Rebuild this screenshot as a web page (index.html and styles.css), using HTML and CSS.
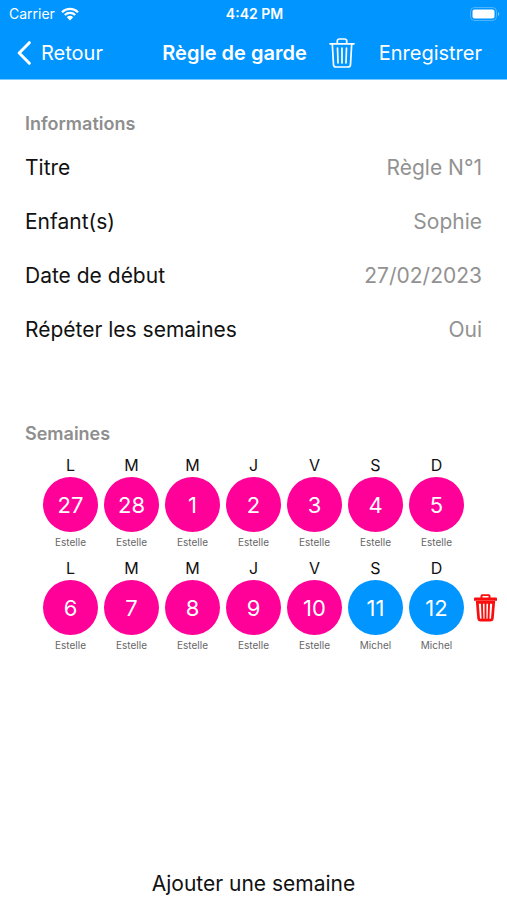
FILE: index.html
```html
<!DOCTYPE html>
<html lang="fr">
<head>
<meta charset="utf-8">
<meta name="viewport" content="width=device-width, initial-scale=1">
<title>Règle de garde</title>
<link rel="stylesheet" href="styles.css">
</head>
<body>
<header class="header">
  <div class="status">
    <div class="carrier">
      <span>Carrier</span>
      <svg class="wifi" viewBox="0 0 18 14" aria-hidden="true">
        <path d="M1 5.2a11.4 11.4 0 0 1 16 0M3.8 8a7.4 7.4 0 0 1 10.4 0" fill="none" stroke="currentColor" stroke-width="2.2"/>
        <path d="M5.8 10.2a4.5 4.5 0 0 1 6.4 0L9 13.4z" fill="currentColor"/>
      </svg>
    </div>
    <span class="clock">4:42 PM</span>
    <svg class="battery" viewBox="0 0 30 14" aria-hidden="true">
      <rect x="0.5" y="0.5" width="26" height="13" rx="4" fill="none" stroke="currentColor" opacity="0.3"/>
      <rect x="2.500" y="2.500" width="22" height="9" rx="2" fill="currentColor"/>
      <path d="M28 5v4c1.600-.6 1.600-3.400 0-4z" fill="currentColor" opacity="0.5"/>
    </svg>
  </div>
  <nav class="nav">
    <button class="back" type="button">
      <svg class="chevron" viewBox="0 0 14 24" aria-hidden="true">
        <path d="M12.300 1.700 2.200 12l10.100 10.300" fill="none" stroke="currentColor" stroke-width="3" stroke-linecap="round" stroke-linejoin="round"/>
      </svg>
      <span>Retour</span>
    </button>
    <h1 class="title">Règle de garde</h1>
    <button class="delete" type="button" aria-label="Supprimer la règle">
      <svg class="bin" viewBox="0 0 26 30" fill="none" stroke="currentColor" stroke-width="1.700" stroke-linecap="round" stroke-linejoin="round" aria-hidden="true">
        <path d="M1 5.800h24M8.300 5.500V3a2 2 0 0 1 2-2h5.400a2 2 0 0 1 2 2v2.500M3.300 6l1.200 20.500a2.500 2.500 0 0 0 2.500 2.500h12a2.500 2.500 0 0 0 2.500-2.500L22.700 6M8.500 10l.5 15M13 10v15M17.500 10l-.5 15"/>
      </svg>
    </button>
    <button class="save" type="submit" form="rule">Enregistrer</button>
  </nav>
</header>
<main class="main">
  <form id="rule">
    <h2 class="section">Informations</h2>
    <div class="row"><label for="titre">Titre</label><input id="titre" type="text" value="Règle N°1"></div>
    <div class="row"><label for="enfants">Enfant(s)</label><input id="enfants" type="text" value="Sophie"></div>
    <div class="row"><label for="debut">Date de début</label><input id="debut" type="text" value="27/02/2023"></div>
    <div class="row"><label for="repeter">Répéter les semaines</label><input id="repeter" type="text" value="Oui"></div>
  </form>
  <section class="weeks">
    <h2 class="section">Semaines</h2>
    <div class="week">
      <div class="day"><span>L</span><button class="date estelle" type="button">27</button><small>Estelle</small></div>
      <div class="day"><span>M</span><button class="date estelle" type="button">28</button><small>Estelle</small></div>
      <div class="day"><span>M</span><button class="date estelle" type="button">1</button><small>Estelle</small></div>
      <div class="day"><span>J</span><button class="date estelle" type="button">2</button><small>Estelle</small></div>
      <div class="day"><span>V</span><button class="date estelle" type="button">3</button><small>Estelle</small></div>
      <div class="day"><span>S</span><button class="date estelle" type="button">4</button><small>Estelle</small></div>
      <div class="day"><span>D</span><button class="date estelle" type="button">5</button><small>Estelle</small></div>
    </div>
    <div class="week">
      <div class="day"><span>L</span><button class="date estelle" type="button">6</button><small>Estelle</small></div>
      <div class="day"><span>M</span><button class="date estelle" type="button">7</button><small>Estelle</small></div>
      <div class="day"><span>M</span><button class="date estelle" type="button">8</button><small>Estelle</small></div>
      <div class="day"><span>J</span><button class="date estelle" type="button">9</button><small>Estelle</small></div>
      <div class="day"><span>V</span><button class="date estelle" type="button">10</button><small>Estelle</small></div>
      <div class="day"><span>S</span><button class="date michel" type="button">11</button><small>Michel</small></div>
      <div class="day"><span>D</span><button class="date michel" type="button">12</button><small>Michel</small></div>
      <button class="remove" type="button" aria-label="Supprimer la semaine">
        <svg viewBox="0 0 23 28" aria-hidden="true">
          <path d="M6.500 3.500V2A1.700 1.700 0 0 1 8.200.3h6.600A1.700 1.700 0 0 1 16.500 2v1.500H22a1 1 0 0 1 1 1v2.200H0V4.500a1 1 0 0 1 1-1zM8.500 3.500h6V2.100h-6z" fill="currentColor" fill-rule="evenodd"/>
          <path d="M3.300 8.300l1.300 15.900a2.200 2.200 0 0 0 2.200 2h9.400a2.200 2.200 0 0 0 2.200-2l1.300-15.900z" fill="none" stroke="currentColor" stroke-width="2.700"/>
          <path d="M7.900 9l.6 16M11.500 9v16M15.100 9l-.6 16" fill="none" stroke="currentColor" stroke-width="1.900"/>
        </svg>
      </button>
    </div>
  </section>
</main>
<footer class="footer">
  <button class="add" type="button">Ajouter une semaine</button>
</footer>
</body>
</html>
```
FILE: styles.css
```css
* {
  box-sizing: border-box;
}

body {
  margin: 0;
  min-height: 100vh;
  display: flex;
  flex-direction: column;
  background: #fff;
  color: #111;
  font-family: Inter, "Liberation Sans", sans-serif;
  font-size: 21px;
  line-height: 24px;
}

button,
input {
  margin: 0;
  padding: 0;
  border: 0;
  background: none;
  color: inherit;
  font: inherit;
}

svg {
  display: block;
}

.header {
  background: #0095ff;
  border-bottom: 1px solid #7cc8ff;
  color: #fff;
}

.status {
  display: grid;
  grid-template-columns: 1fr auto 1fr;
  align-items: center;
  height: 27px;
  padding: 0 7px 0 9px;
  font-size: 14px;
  line-height: 20px;
}

.carrier {
  display: flex;
  align-items: center;
  gap: 6px;
}

.wifi {
  width: 18px;
  height: 14px;
}

.clock {
  font-weight: 600;
}

.battery {
  width: 30px;
  height: 14px;
  justify-self: end;
}

.nav {
  display: flex;
  align-items: center;
  height: 52px;
  padding: 0 25px 0 17px;
  font-size: 20px;
}

.back {
  display: flex;
  align-items: center;
  gap: 10px;
}

.chevron {
  width: 14px;
  height: 24px;
}

.title {
  margin: 0 0 0 auto;
  font-size: 20px;
  font-weight: 600;
}

.delete {
  margin: 0 24px 0 22px;
}

.bin {
  width: 26px;
  height: 30px;
}

.main {
  flex: 1;
  padding-top: 32px;
}

.section {
  margin: 0;
  padding: 0 25px;
  color: #8e8e8e;
  font-size: 18px;
  font-weight: 600;
  line-height: 24px;
}

.row {
  display: flex;
  align-items: center;
  gap: 16px;
  height: 54px;
  padding: 0 25px;
}

.section + .row {
  margin-top: 5px;
}

.row input {
  flex: 1;
  min-width: 0;
  color: #929292;
  text-align: right;
}

.weeks {
  margin-top: 65px;
}

.week {
  display: grid;
  grid-template-columns: repeat(7, 1fr) 27px;
  column-gap: 6px;
  padding: 0 10px 4px 43px;
}

.section + .week {
  margin-top: 7px;
}

.day {
  display: flex;
  flex-direction: column;
  text-align: center;
  font-size: 16px;
}

.date {
  width: 100%;
  aspect-ratio: 1;
  border-radius: 50%;
  color: #fff;
  font-size: 22px;
}

.estelle {
  background: #ff0099;
}

.michel {
  background: #0095ff;
}

.day small {
  color: #666;
  font-size: 10px;
  line-height: 20px;
}

.remove {
  align-self: center;
  justify-self: end;
  padding-top: 4px;
  color: #f90d0d;
}

.remove svg {
  width: 23px;
  height: 28px;
}

.footer {
  padding: 0 25px 4px;
  text-align: center;
}
```
